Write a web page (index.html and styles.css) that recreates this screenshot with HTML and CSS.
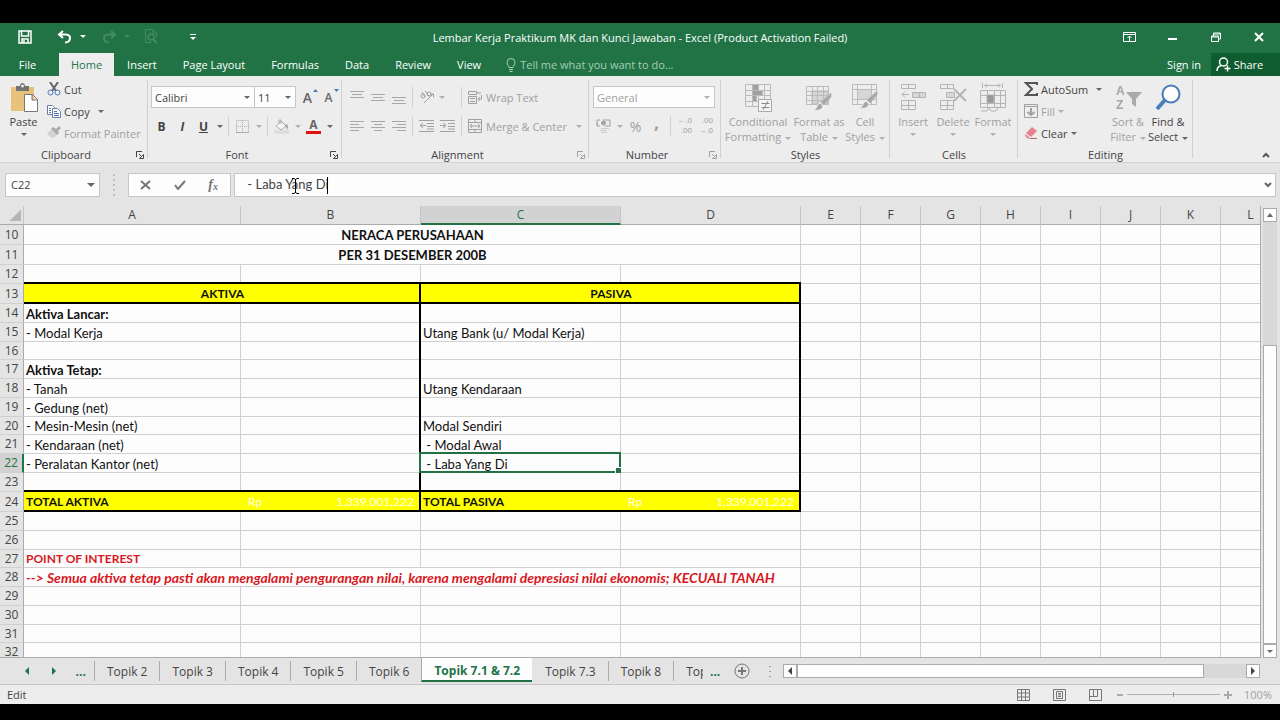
FILE: index.html
```html
<!DOCTYPE html>
<html lang="en">
<head>
    <meta charset="UTF-8">
    <meta name="viewport" content="width=device-width, initial-scale=1.0">
    <title>Lembar Kerja Praktikum MK dan Kunci Jawaban - Excel</title>
    <link rel="stylesheet" href="styles.css">
</head>
<body>
    <svg class="defs" width="0" height="0" aria-hidden="true">
        <symbol id="launcher" viewBox="0 0 8 8"><path d="M.5 6V.5H6M3 3l3 3M7.500 3.500v4h-4z" fill="none" stroke="currentColor"/></symbol>
        <symbol id="brush" viewBox="0 0 20 20"><path d="M19 1v4l-7 8-3-3z" fill="#a6a6a6"/><path d="M8 11l3 3c-1 4-5 5-9 4 3-1 3-6 6-7z" fill="#a6a6a6" stroke="#ededed"/></symbol>
    </svg>

    <header class="titlebar">
        <div class="quick-access">
            <button class="qa-save" aria-label="Save"><svg width="14" height="14" viewBox="0 0 14 14" fill="none" stroke="#fff" stroke-width="1.500"><path d="M1 1h12v12H1zM3.500 1v5h7V1M4 13V9h6v4"/><path d="M6 10v3"/></svg></button>
            <button class="qa-undo" aria-label="Undo"><svg width="16" height="14" viewBox="0 0 16 14" fill="none" stroke="#fff" stroke-width="2"><path d="M6 1L2 4.500l4 3.500M2 4.500h7c6 0 5 8-1 8"/></svg><span class="arrow"></span></button>
            <button class="qa-redo dim" aria-label="Redo"><svg width="16" height="14" viewBox="0 0 16 14" fill="none" stroke="#468a62" stroke-width="2"><path d="M10 1l4 3.500L10 8M14 4.500H7c-6 0-5 8 1 8"/></svg><span class="arrow"></span></button>
            <button class="qa-preview dim" aria-label="Print Preview"><svg width="14" height="15" viewBox="0 0 14 15" fill="none" stroke="#468a62"><path d="M12.500 8V4L9 .500H1.500v13H8M9 .500V4h3.500"/><circle cx="7" cy="8" r="3" stroke-width="1.500"/><path d="M9 10l4 4" stroke-width="2"/></svg></button>
            <button class="qa-more" aria-label="Customize Quick Access Toolbar"><i></i><span class="arrow"></span></button>
        </div>
        <h1>Lembar Kerja Praktikum MK dan Kunci Jawaban - Excel (Product Activation Failed)</h1>
        <div class="window-buttons">
            <button aria-label="Ribbon Display Options"><svg width="13" height="10" viewBox="0 0 13 10" fill="none" stroke="#fff"><path d="M.5.500h12v9H.500zM.5 2.500h12M6.500 9V4.500M4.500 6l2-2 2 2"/></svg></button>
            <button aria-label="Minimize"><svg width="9" height="10" viewBox="0 0 9 10"><path d="M0 7h9" stroke="#fff" stroke-width="2"/></svg></button>
            <button aria-label="Restore Down"><svg width="10" height="10" viewBox="0 0 10 10" fill="none" stroke="#fff"><path d="M.5 4h7v5.500h-7zM.5 5h7M2.500 4V1h7v6H8M2.500 2h7"/></svg></button>
            <button aria-label="Close"><svg width="10" height="10" viewBox="0 0 10 10"><path d="M1 1l8 8M9 1L1 9" stroke="#fff" stroke-width="2"/></svg></button>
        </div>
    </header>

    <nav class="menu">
        <button class="file">File</button>
        <button class="active">Home</button>
        <button>Insert</button>
        <button>Page Layout</button>
        <button>Formulas</button>
        <button>Data</button>
        <button>Review</button>
        <button>View</button>
        <label class="tell-me">
            <svg width="10" height="14" viewBox="0 0 10 14" fill="none" stroke="#a6cdb6"><path d="M3 9.500C3 7.500 1 7 1 4.500a4 4 0 0 1 8 0C9 7 7 7.500 7 9.500zM3 11.500h4M3.500 13.500h3"/></svg>
            <input type="text" placeholder="Tell me what you want to do..." aria-label="Tell me what you want to do">
        </label>
        <a class="sign-in" href="#">Sign in</a>
        <button class="share"><svg width="15" height="15" viewBox="0 0 15 15" fill="none" stroke="#fff" stroke-width="1.500"><circle cx="7.500" cy="5" r="4"/><path d="M1 14c0-3 2-5 4.500-5.500M11.500 8.500v6M8.500 11.500h6"/></svg>Share</button>
    </nav>

    <section class="ribbon">
        <div class="group clipboard">
            <div class="group-body">
                <button class="big"><svg width="28" height="29" viewBox="0 0 28 29"><path d="M1 4h23v24H1z" fill="#e8c27a"/><path d="M6 8V3h4c0-4 5-4 5 0h4v5z" fill="#737373"/><circle cx="12.500" cy="3" r="1.500" fill="#ededed"/><path d="M14.500 11.500h8l5 5v12h-13zM22 11.500V17h5" fill="#fff" stroke="#777"/></svg><span>Paste</span><span class="arrow"></span></button>
                <div class="stack">
                    <button><svg width="14" height="14" viewBox="0 0 14 14" fill="none"><path d="M3 0l6 9M11 0L5 9" stroke="#666" stroke-width="2"/><circle cx="3.500" cy="10.500" r="2.500" stroke="#4a78b5"/><circle cx="10.500" cy="10.500" r="2.500" stroke="#4a78b5"/></svg>Cut</button>
                    <button><svg width="14" height="14" viewBox="0 0 14 14" fill="#fff" stroke="#6a7f9b"><path d="M.5 1.500h5l2 2v7h-7z"/><path d="M5.500 4.500h5l3 3v6h-8z"/><path d="M2 4.500h2M2 6.500h2M2 8.500h2M7 7.500h3M7 9.500h5M7 11.500h5" stroke="#4a78b5"/></svg>Copy <span class="arrow spaced"></span></button>
                    <button class="dim"><svg width="14" height="14" viewBox="0 0 14 14"><path d="M9 3l3-3 2 2-3 3 1 2-2 2-6-6 2-2z" fill="#aaa"/><path d="M4 4l6 5-4 3C4 12 2 10 0 7z" fill="#d2d2d2"/></svg>Format Painter</button>
                </div>
            </div>
            <div class="group-name">Clipboard<svg class="launcher"><use href="#launcher"/></svg></div>
        </div>

        <div class="group font">
            <div class="group-body rows">
                <div class="row">
                    <span class="combo font-name"><select aria-label="Font"><option>Calibri</option></select></span>
                    <span class="combo font-size"><select aria-label="Font size"><option>11</option></select></span>
                    <button class="tool" aria-label="Increase Font Size"><b class="letter">A</b><svg class="mark" width="5" height="3" viewBox="0 0 5 3"><path d="M0 3L2.500 0 5 3z" fill="#4a78b5"/></svg></button>
                    <button class="tool" aria-label="Decrease Font Size"><b class="letter small">A</b><svg class="mark" width="5" height="3" viewBox="0 0 5 3"><path d="M0 0l2.500 3L5 0z" fill="#4a78b5"/></svg></button>
                </div>
                <div class="row">
                    <button class="tool"><b>B</b></button>
                    <button class="tool"><b class="italic">I</b></button>
                    <button class="tool"><b class="underline">U</b></button>
                    <button class="drop" aria-label="Underline style"><span class="arrow"></span></button>
                    <span class="sep"></span>
                    <button class="tool" aria-label="Borders"><svg width="13" height="13" viewBox="0 0 13 13" fill="none" stroke="#aaa"><path d="M.5.500h12v12H.500zM6.500 0v13M0 6.500h13" stroke-dasharray="1 1"/><path d="M0 12.500h13"/></svg></button>
                    <button class="drop dim" aria-label="Border style"><span class="arrow"></span></button>
                    <span class="sep"></span>
                    <button class="tool" aria-label="Fill Color"><svg width="15" height="15" viewBox="0 0 15 15"><path d="M0 11h15v4H0z" fill="#dedede"/><path d="M2 7l5-5 5 5-5 4zM5 5V1h2v4" fill="#f5f5f5" stroke="#aaa"/><path d="M12 5c3 1 2 4 1 6L11 6z" fill="#aaa"/></svg></button>
                    <button class="drop dim" aria-label="Fill color list"><span class="arrow"></span></button>
                    <button class="tool" aria-label="Font Color"><b class="font-color">A</b></button>
                    <button class="drop" aria-label="Font color list"><span class="arrow"></span></button>
                </div>
            </div>
            <div class="group-name">Font<svg class="launcher"><use href="#launcher"/></svg></div>
        </div>

        <div class="group alignment">
            <div class="group-body rows dim">
                <div class="row">
                    <button class="tool" aria-label="Top Align"><svg width="14" height="14" viewBox="0 0 14 14" stroke="#a8a8a8"><path d="M0 1.500h14M2 4.500h10M0 7.500h14"/></svg></button>
                    <button class="tool" aria-label="Middle Align"><svg width="14" height="14" viewBox="0 0 14 14" stroke="#a8a8a8"><path d="M0 4.500h14M2 7.500h10M0 10.500h14"/></svg></button>
                    <button class="tool" aria-label="Bottom Align"><svg width="14" height="14" viewBox="0 0 14 14" stroke="#a8a8a8"><path d="M0 7.500h14M2 10.500h10M0 13.500h14"/></svg></button>
                    <span class="sep"></span>
                    <button class="orient" aria-label="Orientation"><svg width="15" height="15" viewBox="0 0 15 15" fill="none" stroke="#a0a0a0"><circle cx="3" cy="6" r="2"/><path d="M2 2l3 5M5 1l4 5M4 13L13 4M10 4h3.500v3.500"/><circle cx="9" cy="4" r="2"/></svg><span class="arrow"></span></button>
                    <span class="sep"></span>
                    <button class="wide"><svg width="14" height="14" viewBox="0 0 14 14" fill="none" stroke="#a0a0a0"><path d="M.5 1.500h8v3h-8zM8 3h5M.5 6.500h8v7h-8zM2 8.500h5M2 11.500h5M13.500 5v4H10M12 7l-2 2 2 2"/></svg>Wrap Text</button>
                </div>
                <div class="row">
                    <button class="tool" aria-label="Align Left"><svg width="14" height="14" viewBox="0 0 14 14" stroke="#a8a8a8"><path d="M0 2.500h14M0 5.500h9M0 8.500h14M0 11.500h9"/></svg></button>
                    <button class="tool" aria-label="Center"><svg width="14" height="14" viewBox="0 0 14 14" stroke="#a8a8a8"><path d="M0 2.500h14M3 5.500h8M0 8.500h14M3 11.500h8"/></svg></button>
                    <button class="tool" aria-label="Align Right"><svg width="14" height="14" viewBox="0 0 14 14" stroke="#a8a8a8"><path d="M0 2.500h14M5 5.500h9M0 8.500h14M5 11.500h9"/></svg></button>
                    <span class="sep"></span>
                    <button class="tool" aria-label="Decrease Indent"><svg width="15" height="14" viewBox="0 0 15 14" fill="none" stroke="#a0a0a0"><path d="M0 1.500h15M8 4.500h7M8 7.500h7M0 12.500h15M8 10h7M1 6.500h6M4 4L1 6.500 4 9"/></svg></button>
                    <button class="tool" aria-label="Increase Indent"><svg width="15" height="14" viewBox="0 0 15 14" fill="none" stroke="#a0a0a0"><path d="M0 1.500h15M8 4.500h7M8 7.500h7M0 12.500h15M8 10h7M0 6.500h6M3 4l3 2.500L3 9"/></svg></button>
                    <span class="sep"></span>
                    <button class="wide"><svg width="14" height="14" viewBox="0 0 14 14" fill="none" stroke="#a0a0a0"><path d="M.5.500h13v13H.500zM0 3.500h14M0 10.500h14M7 0v3M7 11v3M2 7h10M4 5L2 7l2 2M10 5l2 2-2 2"/></svg>Merge &amp; Center <span class="arrow spaced"></span></button>
                </div>
            </div>
            <div class="group-name">Alignment<svg class="launcher dim"><use href="#launcher"/></svg></div>
        </div>

        <div class="group number">
            <div class="group-body rows dim">
                <div class="row">
                    <span class="combo format"><select aria-label="Number format"><option>General</option></select></span>
                </div>
                <div class="row">
                    <button class="tool" aria-label="Accounting Number Format"><svg width="15" height="15" viewBox="0 0 15 15" fill="none" stroke="#a0a0a0"><path d="M1 6V1h3M7 1h7v6H9M1 4v3h3"/><circle cx="7.500" cy="4" r="2" fill="#a8a8a8"/><path d="M5 9.500h8M4 11.500h7M5 13.500h6" stroke="#ccc"/></svg></button>
                    <button class="drop" aria-label="Currency list"><span class="arrow"></span></button>
                    <button class="tool percent">%</button>
                    <button class="tool comma"><b>,</b></button>
                    <span class="sep"></span>
                    <button class="tool decimals"><span>&larr;.0</span><span>.00</span></button>
                    <button class="tool decimals"><span>.00</span><span>&rarr;.0</span></button>
                </div>
            </div>
            <div class="group-name">Number<svg class="launcher dim"><use href="#launcher"/></svg></div>
        </div>

        <div class="group styles">
            <div class="group-body dim">
                <button class="big cond"><svg width="28" height="29" viewBox="0 0 28 29" fill="none" stroke="#bbb"><path d="M1.500 1.500h25v22h-25zM1 7.500h25M1 12.500h25M1 18.500h25M8.500 1v22M14.500 1v22M20.500 1v22"/><path d="M8.500 1.500h6v6h-6zM8.500 7.500h10v5h-10zM8.500 12.500h4v6h-4z" fill="#a0a0a0"/><path d="M14.500 16.500h13v12h-13z" fill="#f5f5f5" stroke="#aaa"/><path d="M17.500 20.500h8M17.500 24.500h8M24 18l-5 9" stroke="#888"/></svg><span>Conditional<br>Formatting <i class="arrow"></i></span></button>
                <button class="big fmt"><svg width="28" height="29" viewBox="0 0 28 29" fill="none" stroke="#bbb"><path d="M7 8h16v13H7z" fill="#d6d6d6"/><path d="M1.500 3.500h22v18h-22zM1 8.500h22M1 12.500h22M1 17.500h22M7.500 3v18M12.500 3v18M18.500 3v18"/><use href="#brush" x="7" y="9" width="20" height="20"/></svg><span>Format as<br>Table <i class="arrow"></i></span></button>
                <button class="big cell"><svg width="28" height="29" viewBox="0 0 28 29" fill="none" stroke="#bbb"><path d="M1.500 1.500h24v20h-24zM1 6.500h24M1 16.500h24M6.500 1v20M20.500 1v20"/><path d="M6.500 6.500h14v10h-14z" fill="#d6d6d6"/><use href="#brush" x="7" y="7" width="20" height="20"/></svg><span>Cell<br>Styles <i class="arrow"></i></span></button>
            </div>
            <div class="group-name">Styles</div>
        </div>

        <div class="group cells">
            <div class="group-body dim">
                <button class="big"><svg width="26" height="29" viewBox="0 0 26 29" fill="none" stroke="#b4b4b4"><path d="M1.500 1.500h14v4h-14zM8.500 1v5M1.500 17.500h14v9h-14zM1 22.500h14M8.500 17v9M2 11.500h7M5 8.500l-3 3 3 3"/><path d="M12.500 9.500h13v5h-13zM19.500 9v5" fill="#d6d6d6"/></svg><span>Insert</span><span class="arrow"></span></button>
                <button class="big"><svg width="28" height="29" viewBox="0 0 28 29" fill="none" stroke="#b4b4b4"><path d="M1.500 1.500h13v4h-13zM8.500 1v5M1.500 17.500h13v9h-13zM1 22.500h13M8.500 17v9"/><path d="M7.500 9.500h8v5h-8z" fill="#d6d6d6"/><path d="M15 6l12 12M27 6L15 18" stroke-width="2"/></svg><span>Delete</span><span class="arrow"></span></button>
                <button class="big"><svg width="28" height="29" viewBox="0 0 28 29" fill="none" stroke="#b4b4b4"><path d="M3.500 0v5M23.500 0v5M5 2.500h17M8 .500l-2 2 2 2M19 .500l2 2-2 2M1.500 7.500h25v17h-25zM1 12.500h25M1 20.500h25M8.500 7v17M15.500 7v17M21.500 7v17M2 28h6l2-3 2 3h5l2-3"/><path d="M8 12h7v8H8z" fill="#999"/></svg><span>Format</span><span class="arrow"></span></button>
            </div>
            <div class="group-name">Cells</div>
        </div>

        <div class="group editing">
            <div class="group-body">
                <div class="stack">
                    <button><svg width="14" height="14" viewBox="0 0 14 14" fill="none" stroke="#555" stroke-width="2"><path d="M13 3V1H2l6 6-6 6h11v-2"/></svg>AutoSum <span class="arrow spaced"></span></button>
                    <button class="dim"><svg width="14" height="14" viewBox="0 0 14 14" fill="none" stroke="#a0a0a0"><path d="M.5.500h13v13H.500zM.5 2.500h13"/><path d="M7 4v7M3.500 8L7 11l3.500-3" stroke-width="2"/></svg>Fill <span class="arrow"></span></button>
                    <button><svg width="14" height="14" viewBox="0 0 14 14"><path d="M8 1l5 4-6 6-5-4z" fill="#e8828f"/><path d="M1.500 8L6 12l-2 1-3-3z" fill="#e8828f"/><path d="M6 12.500h7" stroke="#a66"/></svg>Clear <span class="arrow"></span></button>
                </div>
                <button class="big sort dim"><svg width="28" height="29" viewBox="0 0 28 29"><text x="2" y="12" class="icon-letter">A</text><text x="2" y="26" class="icon-letter">Z</text><path d="M12 9h16l-6 7v8l-4-3v-5z" fill="#aaa"/></svg><span>Sort &amp;<br>Filter <i class="arrow"></i></span></button>
                <button class="big find"><svg width="28" height="29" viewBox="0 0 28 29" fill="none" stroke="#4a7ebb"><circle cx="17" cy="11" r="8.500" fill="#fff" stroke-width="2"/><path d="M11 17l-8 9" stroke-width="4"/></svg><span>Find &amp;<br>Select <i class="arrow"></i></span></button>
            </div>
            <div class="group-name">Editing</div>
        </div>
        <button class="collapse" aria-label="Collapse the Ribbon"><svg width="8" height="6" viewBox="0 0 8 6" fill="none" stroke="#555" stroke-width="2"><path d="M1 5l3-3 3 3"/></svg></button>
    </section>

    <section class="formula-bar">
        <span class="combo name-box"><input type="text" value="C22" aria-label="Name Box"></span>
        <span class="grip"></span>
        <div class="formula-buttons">
            <button aria-label="Cancel"><svg width="11" height="10" viewBox="0 0 11 10"><path d="M1 1l9 8M10 1L1 9" stroke="#777" stroke-width="2"/></svg></button>
            <button aria-label="Enter"><svg width="12" height="10" viewBox="0 0 12 10" fill="none"><path d="M1 5l3 4 7-8" stroke="#777" stroke-width="2"/></svg></button>
            <button class="fx" aria-label="Insert Function">f<small>x</small></button>
        </div>
        <div class="formula">
            <input type="text" value=" - Laba Yang Di" aria-label="Formula Bar">
            <span class="caret"></span>
            <svg class="ibeam" width="9" height="16" viewBox="0 0 9 16" fill="none" stroke="#000"><path d="M1 .500h2l1.500 1L6 .500h2M4.500 1v14M1 15.500h2l1.500-1 1.500 1h2"/></svg>
            <button aria-label="Expand Formula Bar"><svg width="8" height="6" viewBox="0 0 8 6" fill="none" stroke="#666" stroke-width="2"><path d="M1 1l3 3 3-3"/></svg></button>
        </div>
    </section>

    <main class="workspace">
        <div class="sheet">
            <table>
                <colgroup><col class="col-head"><col class="col-a"><col class="col-b"><col class="col-c"><col class="col-b"><col span="8" class="col-e"></colgroup>
                <thead>
                    <tr><th class="corner"></th><th>A</th><th>B</th><th class="selected">C</th><th>D</th><th>E</th><th>F</th><th>G</th><th>H</th><th>I</th><th>J</th><th>K</th><th>L</th></tr>
                </thead>
                <tbody>
                    <tr class="tall"><th>10</th><td colspan="4" class="center bold">NERACA PERUSAHAAN</td><td></td><td></td><td></td><td></td><td></td><td></td><td></td><td></td></tr>
                    <tr class="tall"><th>11</th><td colspan="4" class="center bold">PER 31 DESEMBER 200B</td><td></td><td></td><td></td><td></td><td></td><td></td><td></td><td></td></tr>
                    <tr><th>12</th><td class="thick"></td><td class="thick"></td><td class="thick"></td><td class="thick"></td><td></td><td></td><td></td><td></td><td></td><td></td><td></td><td></td></tr>
                    <tr class="tall"><th>13</th><td colspan="2" class="center bold caps yellow thick edge">AKTIVA</td><td colspan="2" class="center bold caps yellow thick edge">PASIVA</td><td></td><td></td><td></td><td></td><td></td><td></td><td></td><td></td></tr>
                    <tr><th>14</th><td class="bold">Aktiva Lancar:</td><td class="edge"></td><td></td><td class="edge"></td><td></td><td></td><td></td><td></td><td></td><td></td><td></td><td></td></tr>
                    <tr><th>15</th><td>- Modal Kerja</td><td class="edge"></td><td>Utang Bank (u/ Modal Kerja)</td><td class="edge"></td><td></td><td></td><td></td><td></td><td></td><td></td><td></td><td></td></tr>
                    <tr class="short"><th>16</th><td></td><td class="edge"></td><td></td><td class="edge"></td><td></td><td></td><td></td><td></td><td></td><td></td><td></td><td></td></tr>
                    <tr><th>17</th><td class="bold">Aktiva Tetap:</td><td class="edge"></td><td></td><td class="edge"></td><td></td><td></td><td></td><td></td><td></td><td></td><td></td><td></td></tr>
                    <tr><th>18</th><td>- Tanah</td><td class="edge"></td><td>Utang Kendaraan</td><td class="edge"></td><td></td><td></td><td></td><td></td><td></td><td></td><td></td><td></td></tr>
                    <tr><th>19</th><td>- Gedung (net)</td><td class="edge"></td><td></td><td class="edge"></td><td></td><td></td><td></td><td></td><td></td><td></td><td></td><td></td></tr>
                    <tr class="short"><th>20</th><td>- Mesin-Mesin (net)</td><td class="edge"></td><td>Modal Sendiri</td><td class="edge"></td><td></td><td></td><td></td><td></td><td></td><td></td><td></td><td></td></tr>
                    <tr><th>21</th><td>- Kendaraan (net)</td><td class="edge"></td><td> &nbsp;- Modal Awal</td><td class="edge"></td><td></td><td></td><td></td><td></td><td></td><td></td><td></td><td></td></tr>
                    <tr><th class="selected">22</th><td>- Peralatan Kantor (net)</td><td class="edge"></td><td class="current"> &nbsp;- Laba Yang Di<span class="selection"></span></td><td class="edge"></td><td></td><td></td><td></td><td></td><td></td><td></td><td></td><td></td></tr>
                    <tr><th>23</th><td class="thick"></td><td class="thick edge"></td><td class="thick"></td><td class="thick edge"></td><td></td><td></td><td></td><td></td><td></td><td></td><td></td><td></td></tr>
                    <tr class="tall"><th>24</th><td class="bold caps yellow thick open">TOTAL AKTIVA</td><td class="yellow thick edge"><div class="money"><span>Rp</span><span>1,339,001,222</span></div></td><td class="bold caps yellow thick open">TOTAL PASIVA</td><td class="yellow thick edge"><div class="money"><span>Rp</span><span>1,339,001,222</span></div></td><td></td><td></td><td></td><td></td><td></td><td></td><td></td><td></td></tr>
                    <tr><th>25</th><td></td><td></td><td></td><td></td><td></td><td></td><td></td><td></td><td></td><td></td><td></td><td></td></tr>
                    <tr><th>26</th><td></td><td></td><td></td><td></td><td></td><td></td><td></td><td></td><td></td><td></td><td></td><td></td></tr>
                    <tr class="short"><th>27</th><td class="bold caps red">POINT OF INTEREST</td><td></td><td></td><td></td><td></td><td></td><td></td><td></td><td></td><td></td><td></td><td></td></tr>
                    <tr><th>28</th><td colspan="4" class="bold red note">--&gt; Semua aktiva tetap pasti akan mengalami pengurangan nilai, karena mengalami depresiasi nilai ekonomis; KECUALI TANAH</td><td></td><td></td><td></td><td></td><td></td><td></td><td></td><td></td></tr>
                    <tr><th>29</th><td></td><td></td><td></td><td></td><td></td><td></td><td></td><td></td><td></td><td></td><td></td><td></td></tr>
                    <tr><th>30</th><td></td><td></td><td></td><td></td><td></td><td></td><td></td><td></td><td></td><td></td><td></td><td></td></tr>
                    <tr class="short"><th>31</th><td></td><td></td><td></td><td></td><td></td><td></td><td></td><td></td><td></td><td></td><td></td><td></td></tr>
                    <tr><th>32</th><td></td><td></td><td></td><td></td><td></td><td></td><td></td><td></td><td></td><td></td><td></td><td></td></tr>
                </tbody>
            </table>
        </div>
        <div class="scroll vertical">
            <button aria-label="Scroll up"><span class="arrow up"></span></button>
            <span class="track"></span>
            <span class="thumb"></span>
            <button aria-label="Scroll down"><span class="arrow"></span></button>
        </div>
    </main>

    <footer>
        <div class="sheet-tabs">
            <div class="tab-nav">
                <button aria-label="Previous sheet"><span class="arrow left"></span></button>
                <button aria-label="Next sheet"><span class="arrow right"></span></button>
                <button>...</button>
            </div>
            <button class="tab">Topik 2</button>
            <button class="tab">Topik 3</button>
            <button class="tab">Topik 4</button>
            <button class="tab">Topik 5</button>
            <button class="tab">Topik 6</button>
            <button class="tab active">Topik 7.1 &amp; 7.2</button>
            <button class="tab">Topik 7.3</button>
            <button class="tab">Topik 8</button>
            <button class="tab cut">Top</button>
            <button class="more">...</button>
            <button class="add" aria-label="New sheet"><svg width="16" height="16" viewBox="0 0 16 16" fill="none" stroke="#777"><circle cx="8" cy="8" r="7"/><path d="M8 4v8M4 8h8" stroke-width="2"/></svg></button>
            <span class="grip"></span>
            <div class="scroll horizontal">
                <button aria-label="Scroll left"><span class="arrow left"></span></button>
                <span class="thumb"></span>
                <span class="track"></span>
                <button aria-label="Scroll right"><span class="arrow right"></span></button>
            </div>
        </div>
        <div class="status">
            <span class="mode">Edit</span>
            <button aria-label="Normal"><svg width="13" height="12" viewBox="0 0 13 12" fill="none" stroke="#777"><path d="M.5.500h12v11H.500zM0 4h13M0 8h13M4.500 0v12M8.500 0v12"/></svg></button>
            <button aria-label="Page Layout"><svg width="13" height="12" viewBox="0 0 13 12" fill="none" stroke="#777"><path d="M.5.500h12v11H.500zM3.500 2.500h6v7h-6zM5 4.500h3M5 6h3M5 7.500h3"/></svg></button>
            <button aria-label="Page Break Preview"><svg width="13" height="12" viewBox="0 0 13 12" fill="none" stroke="#777"><path d="M.5.500h12v11H.500zM.5 7.500h8V.500M4.500 0v7"/></svg></button>
            <div class="zoom">
                <button aria-label="Zoom out"><svg width="6" height="6" viewBox="0 0 6 6"><path d="M0 3h6" stroke="#aaa" stroke-width="2"/></svg></button>
                <input type="range" min="0" max="100" value="50" aria-label="Zoom">
                <button aria-label="Zoom in"><svg width="8" height="8" viewBox="0 0 8 8"><path d="M0 4h8M4 0v8" stroke="#aaa" stroke-width="2"/></svg></button>
                <span class="percent-value">100%</span>
            </div>
        </div>
    </footer>
</body>
</html>
```

FILE: styles.css
```css
* {
    box-sizing: border-box;
}
body {
    margin: 0;
    padding: 23px 0 16px;
    height: 100vh;
    display: flex;
    flex-direction: column;
    overflow: hidden;
    background: #000;
    color: #444;
    font-family: "Open Sans", "Noto Sans", sans-serif;
    font-size: 11px;
    line-height: 15px;
}
button, input, select {
    font: inherit;
    color: inherit;
    border: none;
    background: none;
    padding: 0;
    margin: 0;
    border-radius: 0;
    outline: none;
}
button {
    display: flex;
    align-items: center;
    justify-content: center;
    white-space: nowrap;
}
svg {
    flex: none;
}
.defs {
    position: absolute;
}
.arrow {
    display: inline-block;
    border: 3px solid transparent;
    border-top-color: #666;
    border-bottom-width: 0;
    vertical-align: middle;
}
.arrow.up {
    border-width: 0 3px 4px;
    border-bottom-color: #666;
}
.arrow.left {
    border-width: 4px 4px 4px 0;
    border-color: transparent #444;
}
.arrow.right {
    border-width: 4px 0 4px 4px;
    border-color: transparent #444;
}
.dim {
    color: #a0a0a0;
}
.dim .arrow {
    border-top-color: #b0b0b0;
}

/* title bar and menu */
.titlebar {
    flex: none;
    display: grid;
    grid-template-columns: 1fr auto 1fr;
    height: 30px;
    background: #217346;
    color: #fff;
}
.titlebar h1 {
    margin: 0;
    font-size: 11px;
    font-weight: normal;
    line-height: 30px;
}
.quick-access {
    display: flex;
    padding: 0 0 3px 3px;
}
.quick-access .arrow {
    border-top-color: #fff;
}
.quick-access .dim .arrow {
    border-top-color: #468a62;
}
.qa-save { width: 44px; }
.qa-undo { width: 48px; }
.qa-redo { width: 40px; }
.qa-undo, .qa-redo { gap: 7px; }
.qa-preview { width: 32px; }
.qa-more {
    width: 52px;
    flex-direction: column;
    gap: 2px;
}
.qa-more i {
    width: 6px;
    height: 1px;
    background: #fff;
}
.window-buttons {
    display: flex;
    justify-content: flex-end;
    padding-bottom: 3px;
}
.window-buttons button {
    width: 43px;
}
.menu {
    flex: none;
    display: flex;
    height: 23px;
    background: #217346;
    color: #fff;
}
.menu button {
    padding: 0 13px;
}
.menu .file {
    width: 55px;
    margin-right: 4px;
}
.menu .active {
    padding: 0 12px;
    background: #ededed;
    color: #217346;
}
.tell-me {
    flex: 1;
    display: flex;
    align-items: center;
    gap: 4px;
    padding-left: 12px;
}
.tell-me input {
    flex: 1;
}
.tell-me input::placeholder {
    color: #a6cdb6;
}
.sign-in {
    color: #fff;
    text-decoration: none;
    line-height: 23px;
    padding-right: 10px;
}
.menu .share {
    width: 69px;
    gap: 3px;
    padding: 0 12px 0 0;
    background: #0e5c2f;
}

/* ribbon */
.ribbon {
    flex: none;
    display: flex;
    height: 87px;
    background: #ededed;
    border-bottom: 1px solid #d2d2d2;
}
.group {
    position: relative;
    flex: none;
    display: flex;
    flex-direction: column;
    justify-content: space-between;
}
/* divider between groups */
.group::after {
    content: "";
    position: absolute;
    right: 0;
    top: 4px;
    bottom: 4px;
    width: 1px;
    background: #d0d0d0;
}
.clipboard { width: 148px; }
.font { width: 194px; }
.alignment { width: 247px; }
.number { width: 132px; }
.styles { width: 169px; }
.cells { width: 128px; }
.editing { width: 175px; }
.group-body {
    display: flex;
}
.group-body.rows {
    flex-direction: column;
    gap: 7px;
    padding: 10px 4px 0;
}
.group-name {
    position: relative;
    text-align: center;
    padding-right: 16px;
}
.styles .group-name, .cells .group-name, .editing .group-name {
    padding-right: 0;
}
.launcher {
    position: absolute;
    right: 4px;
    top: 4px;
    width: 8px;
    height: 8px;
}
.big {
    flex-direction: column;
    justify-content: flex-start;
    padding-top: 7px;
    text-align: center;
}
.big svg {
    margin-bottom: 2px;
}
.big > .arrow {
    margin-top: 4px;
}
.big i.arrow {
    margin-left: 1px;
}
.clipboard .big {
    width: 47px;
}
.stack {
    display: flex;
    flex-direction: column;
    align-items: flex-start;
    padding-top: 2px;
}
.stack button {
    height: 22px;
    gap: 3px;
}
.spaced {
    margin-left: 5px;
}
.row {
    display: flex;
    align-items: center;
    height: 22px;
}
.tool {
    position: relative;
    width: 21px;
    height: 20px;
    font-size: 12px;
}
.drop {
    width: 11px;
    height: 20px;
}
.sep {
    width: 1px;
    height: 20px;
    margin: 0 3px;
    background: #d0d0d0;
}
.combo {
    position: relative;
    display: flex;
    height: 22px;
    border: 1px solid #c6c6c6;
    background: #fdfdfd;
}
.combo select, .combo input {
    appearance: none;
    width: 100%;
    padding: 0 14px 0 3px;
}
.combo::after {
    content: "";
    position: absolute;
    right: 4px;
    top: 9px;
    border: 3px solid transparent;
    border-top-color: #666;
    border-bottom: none;
}
.group-body.rows .row {
    margin: 0 -1px;
}
.font-name { width: 104px; }
.font-size {
    width: 42px;
    margin: 0 1px 0 -1px;
}
.alignment .row, .number .row {
    padding-left: 1px;
}
.format { width: 122px; }
.dim .combo::after {
    border-top-color: #b0b0b0;
}
.letter {
    font-size: 14px;
    font-weight: 600;
    color: #666;
}
.letter.small {
    font-size: 12px;
}
.mark {
    position: absolute;
    right: 0;
    top: 2px;
}
.italic { font-style: italic; }
.underline { text-decoration: underline; }
.font-color {
    width: 15px;
    line-height: 12px;
    color: #666;
    border-bottom: 3px solid #e01010;
}
.orient {
    width: 42px;
    gap: 4px;
    padding-right: 10px;
}
.orient, .wide {
    height: 20px;
}
.wide {
    gap: 4px;
    padding-left: 3px;
}
.percent {
    font-size: 14px;
}
.comma {
    font-size: 18px;
    padding-bottom: 8px;
}
.decimals {
    flex-direction: column;
    align-items: flex-end;
    padding-right: 3px;
    font-family: "Liberation Sans", sans-serif;
    font-size: 8px;
    line-height: 10px;
}
.styles .group-body {
    padding-left: 4px;
}
.cond { width: 66px; }
.fmt { width: 56px; }
.cell { width: 36px; }
.cells .group-body {
    padding-left: 3px;
}
.cells .big { width: 40px; }
.editing .stack {
    padding-left: 6px;
    width: 90px;
}
.sort, .find { width: 40px; }
.icon-letter {
    font-family: "Liberation Sans", sans-serif;
    font-size: 12px;
    font-weight: bold;
    fill: #a6a6a6;
}
.collapse {
    margin: auto 10px 4px auto;
}

/* formula bar */
.formula-bar {
    flex: none;
    display: flex;
    align-items: center;
    height: 43px;
    padding: 0 4px 0 5px;
    background: #e4e4e4;
    font-size: 12px;
}
.formula-bar > * {
    height: 24px;
}
.name-box {
    width: 95px;
    font-size: 11px;
}
.name-box::after {
    border-width: 4px;
}
.name-box input {
    padding-left: 5px;
}
.grip {
    width: 28px;
    background: radial-gradient(circle, #999 1px, transparent 1px) center / 28px 5px;
}
.formula-buttons {
    display: flex;
    width: 103px;
    border: 1px solid #c6c6c6;
    background: #fdfdfd;
}
.formula-buttons button {
    flex: 1;
}
.fx {
    font-family: "Liberation Serif", serif;
    font-style: italic;
    font-weight: bold;
    font-size: 14px;
    color: #777;
}
.fx small {
    font-size: 10px;
    padding-top: 3px;
}
.formula {
    position: relative;
    flex: 1;
    display: flex;
    margin-left: 3px;
    border: 1px solid #c6c6c6;
    background: #fdfdfd;
    font-family: Lato, sans-serif;
    font-size: 13px;
}
.formula input {
    flex: 1;
    padding-left: 9px;
}
.formula button {
    width: 15px;
}
.caret {
    position: absolute;
    left: 92px;
    top: 3px;
    width: 1px;
    height: 17px;
    background: #000;
}
.ibeam {
    position: absolute;
    left: 56px;
    top: 4px;
}

/* sheet */
.workspace {
    flex: 1;
    min-height: 0;
    display: flex;
    background: #e4e4e4;
}
.sheet {
    flex: 1;
    min-width: 0;
    overflow: hidden;
    border-right: 1px solid #ababab;
    border-bottom: 1px solid #ababab;
}
table {
    table-layout: fixed;
    width: 1281px;
    border-collapse: separate;
    border-spacing: 0;
    color: #111;
    font-family: Lato, sans-serif;
    font-size: 13px;
    line-height: 16px;
}
.col-head { width: 24px; }
.col-a { width: 217px; }
.col-b { width: 180px; }
.col-c { width: 200px; }
.col-e { width: 60px; }
th, td {
    padding: 0;
    white-space: nowrap;
}
/* grid lines are inset shadows, so thick and thin ones meet squarely */
td {
    padding: 0 2px;
    background: #fdfdfd;
    box-shadow: inset 0 -1px #d0d0d0, inset -1px 0 #d0d0d0;
}
td.thick {
    box-shadow: inset 0 -2px #000, inset -1px 0 #d0d0d0;
}
td.edge {
    box-shadow: inset -2px 0 #000, inset 0 -1px #d0d0d0;
}
td.thick.edge {
    box-shadow: inset 0 -2px #000, inset -2px 0 #000;
}
td.thick.open {
    box-shadow: inset 0 -2px #000;
}
th {
    background: #e4e4e4;
    color: #444;
    font-family: "Open Sans", sans-serif;
    font-size: 12px;
    font-weight: normal;
    border: 0 solid #ababab;
    border-width: 0 1px 1px 0;
}
thead th {
    height: 19px;
    border-right-color: #c4c4c4;
}
tbody th {
    border-bottom-color: #d0d0d0;
}
tbody tr { height: 19px; }
tbody .tall { height: 20px; }
tbody .short { height: 18px; }
.corner {
    background: linear-gradient(135deg, transparent 50%, #b5b5b5 50%) 10px 4px / 11px 11px no-repeat #e4e4e4;
}
.selected {
    background: #d2d2d2;
    color: #217346;
}
thead .selected {
    border-bottom: 2px solid #217346;
}
tbody .selected {
    border-right: 2px solid #217346;
}
.center { text-align: center; }
.bold { font-weight: bold; }
.red { color: #d8181f; }
.yellow { background: #ff0; }
.caps { font-size: 12px; }
.note {
    font-size: 14px;
    font-style: italic;
}
.money {
    display: flex;
    justify-content: space-between;
    padding: 0 5px;
    color: #fffff0;
    font-size: 12px;
}
.current {
    position: relative;
}
.selection {
    position: absolute;
    inset: -2px 0 0 -2px;
    border: 2px solid #217346;
    z-index: 1;
}
.selection::after {
    content: "";
    position: absolute;
    right: -2px;
    bottom: -2px;
    width: 5px;
    height: 5px;
    background: #217346;
    border: solid #fdfdfd;
    border-width: 1px 0 0 1px;
}

/* scroll bars */
.scroll {
    display: flex;
}
.scroll button, .thumb {
    flex: none;
    border: 1px solid #ababab;
    background: #fdfdfd;
}
.scroll button {
    width: 14px;
    height: 14px;
}
.track {
    flex: 1;
    background: #d8d8d8;
}
.vertical {
    flex-direction: column;
    width: 14px;
    margin: 2px 3px 0 2px;
}
.vertical .track {
    flex: 124;
}
.vertical .thumb {
    flex: 300;
}
.horizontal {
    flex: 1;
    height: 14px;
    margin-right: 20px;
}
.horizontal .thumb {
    flex: 407;
}
.horizontal .track {
    flex: 42;
}

/* sheet tabs */
.sheet-tabs {
    display: flex;
    align-items: center;
    height: 27px;
    background: #e4e4e4;
    border-bottom: 1px solid #c6c6c6;
    font-size: 12px;
}
.tab-nav {
    display: flex;
    width: 94px;
    padding-left: 14px;
    color: #217346;
    font-weight: bold;
}
.tab-nav button {
    width: 27px;
}
.tab-nav .arrow {
    border-right-color: #217346;
    border-left-color: #217346;
}
.tab {
    height: 20px;
    padding: 0 12px;
    border-left: 1px solid #ababab;
}
.tab.active {
    height: 24px;
    align-self: flex-start;
    padding-top: 3px;
    background: #fdfdfd;
    color: #217346;
    font-weight: bold;
    border-bottom: 2px solid #217346;
}
.tab.active + .tab {
    border-left-color: transparent;
}
.tab.cut {
    width: 30px;
    padding-right: 0;
    justify-content: flex-start;
    overflow: hidden;
}
.more {
    width: 24px;
    color: #217346;
    font-weight: bold;
}
.add {
    width: 30px;
}
.sheet-tabs .grip {
    height: 15px;
    width: 26px;
}

/* status bar */
.status {
    display: flex;
    align-items: center;
    height: 19px;
    padding: 0 8px 0 7px;
    background: #ededed;
}
.mode {
    flex: 1;
}
.status > button {
    width: 36px;
}
.zoom {
    display: flex;
    align-items: center;
    gap: 4px;
    padding-left: 4px;
    color: #a0a0a0;
}
.zoom input {
    appearance: none;
    width: 93px;
    height: 9px;
    background: linear-gradient(#b0b0b0, #b0b0b0) center / 100% 1px no-repeat;
}
.zoom input::-webkit-slider-thumb {
    appearance: none;
    width: 1px;
    height: 5px;
    background: #999;
}
.percent-value {
    padding-left: 8px;
}
```
